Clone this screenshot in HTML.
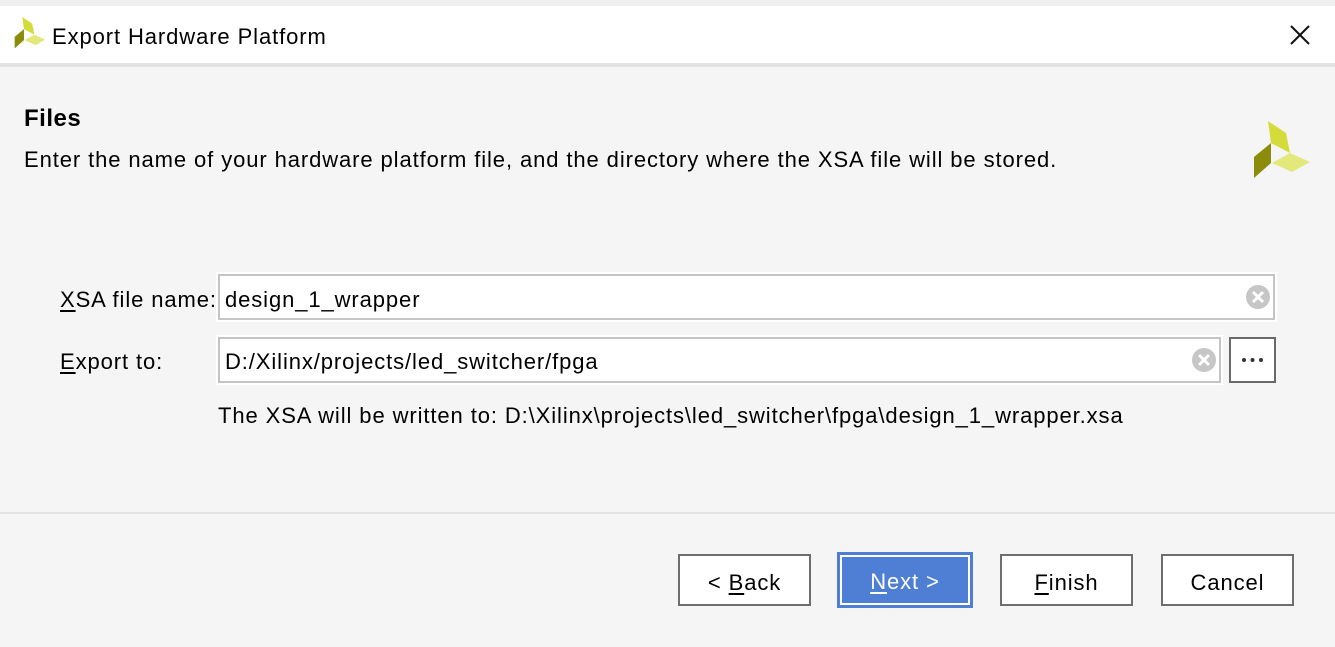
<!DOCTYPE html>
<html><head><style>
*{margin:0;padding:0;box-sizing:border-box}
body{width:1335px;height:647px;background:#f5f5f5;font-family:"Liberation Sans",sans-serif;color:#000;position:relative;overflow:hidden;letter-spacing:0.9px}
.a{position:absolute;white-space:nowrap}
.t{font-size:22px}
.in{position:absolute;background:#fff;border:2px solid #c4c4c4;outline:2px solid #fff}
.clr{position:absolute;width:24px;height:24px;border-radius:50%;background:#c6c6c6}
.btn{position:absolute;background:#fff;border:2px solid #6e6e6e;font-size:22px;text-align:center;line-height:52px}
u{text-decoration:underline;text-underline-offset:3px}
</style></head><body>
<div class="a" style="left:0;top:0;width:1335px;height:6px;background:#f0f0f0"></div>
<div class="a" style="left:0;top:6px;width:1335px;height:57px;background:#fff"></div>
<div class="a" style="left:0;top:63px;width:1335px;height:4px;background:#e3e3e3"></div>
<svg class="a" style="left:12px;top:16px" width="36" height="34" viewBox="1252 119 60 62">
<polygon points="1268,121 1286,133 1290,153 1271,143" fill="#d4dc3a"/>
<polygon points="1272,163 1290,153 1310,162 1292,172" fill="#e2e97a"/>
<polygon points="1254,157 1271,143 1271,163 1254,178" fill="#8a8c0a"/>
</svg>
<div class="a" style="left:52px;top:24px;font-size:22px">Export Hardware Platform</div>
<svg class="a" style="left:1290px;top:25px" width="20" height="20" viewBox="0 0 20 20"><path d="M1 1L19 19M19 1L1 19" stroke="#111" stroke-width="2"/></svg>
<div class="a" style="left:24px;top:105px;font-size:24px;font-weight:bold;letter-spacing:0.5px">Files</div>
<div class="a t" style="left:24px;top:147px">Enter the name of your hardware platform file, and the directory where the XSA file will be stored.</div>
<svg class="a" style="left:1252px;top:119px" width="60" height="62" viewBox="1252 119 60 62">
<polygon points="1268,121 1286,133 1290,153 1271,143" fill="#d4dc3a"/>
<polygon points="1272,163 1290,153 1310,162 1292,172" fill="#e2e97a"/>
<polygon points="1254,157 1271,143 1271,163 1254,178" fill="#8a8c0a"/>
</svg>
<div class="a t" style="left:60px;top:287px"><u>X</u>SA file name:</div>
<div class="in" style="left:218px;top:274px;width:1057px;height:46px"></div>
<div class="a t" style="left:225px;top:287px">design_1_wrapper</div>
<div class="clr" style="left:1246px;top:285px"></div>
<svg class="a" style="left:1246px;top:285px" width="24" height="24"><path d="M7 7L17 17M17 7L7 17" stroke="#fff" stroke-width="3"/></svg>
<div class="a t" style="left:60px;top:349px"><u>E</u>xport to:</div>
<div class="in" style="left:218px;top:337px;width:1003px;height:46px"></div>
<div class="a t" style="left:225px;top:349px">D:/Xilinx/projects/led_switcher/fpga</div>
<div class="clr" style="left:1192px;top:348px"></div>
<svg class="a" style="left:1192px;top:348px" width="24" height="24"><path d="M7 7L17 17M17 7L7 17" stroke="#fff" stroke-width="3"/></svg>
<div class="a" style="left:1229px;top:337px;width:47px;height:46px;border:2px solid #6a6a6a;background:#fff"></div>
<svg class="a" style="left:1229px;top:337px" width="47" height="46"><circle cx="15" cy="23" r="2" fill="#333"/><circle cx="23.5" cy="23" r="2" fill="#333"/><circle cx="32" cy="23" r="2" fill="#333"/></svg>
<div class="a t" style="left:218px;top:403px">The XSA will be written to: D:\Xilinx\projects\led_switcher\fpga\design_1_wrapper.xsa</div>
<div class="a" style="left:0;top:512px;width:1335px;height:2px;background:#e3e3e3"></div>
<div class="btn" style="left:678px;top:554px;width:133px;height:52px;line-height:54px">&lt; <u>B</u>ack</div>
<div class="btn" style="left:837px;top:552px;width:136px;height:56px;background:#4f7fd4;border:3px solid #4f7fd4;color:#fff;box-shadow:inset 0 0 0 2px #fff;line-height:54px"><u>N</u>ext &gt;</div>
<div class="btn" style="left:1000px;top:554px;width:133px;height:52px;line-height:54px"><u>F</u>inish</div>
<div class="btn" style="left:1161px;top:554px;width:133px;height:52px;line-height:54px">Cancel</div>
</body></html>
